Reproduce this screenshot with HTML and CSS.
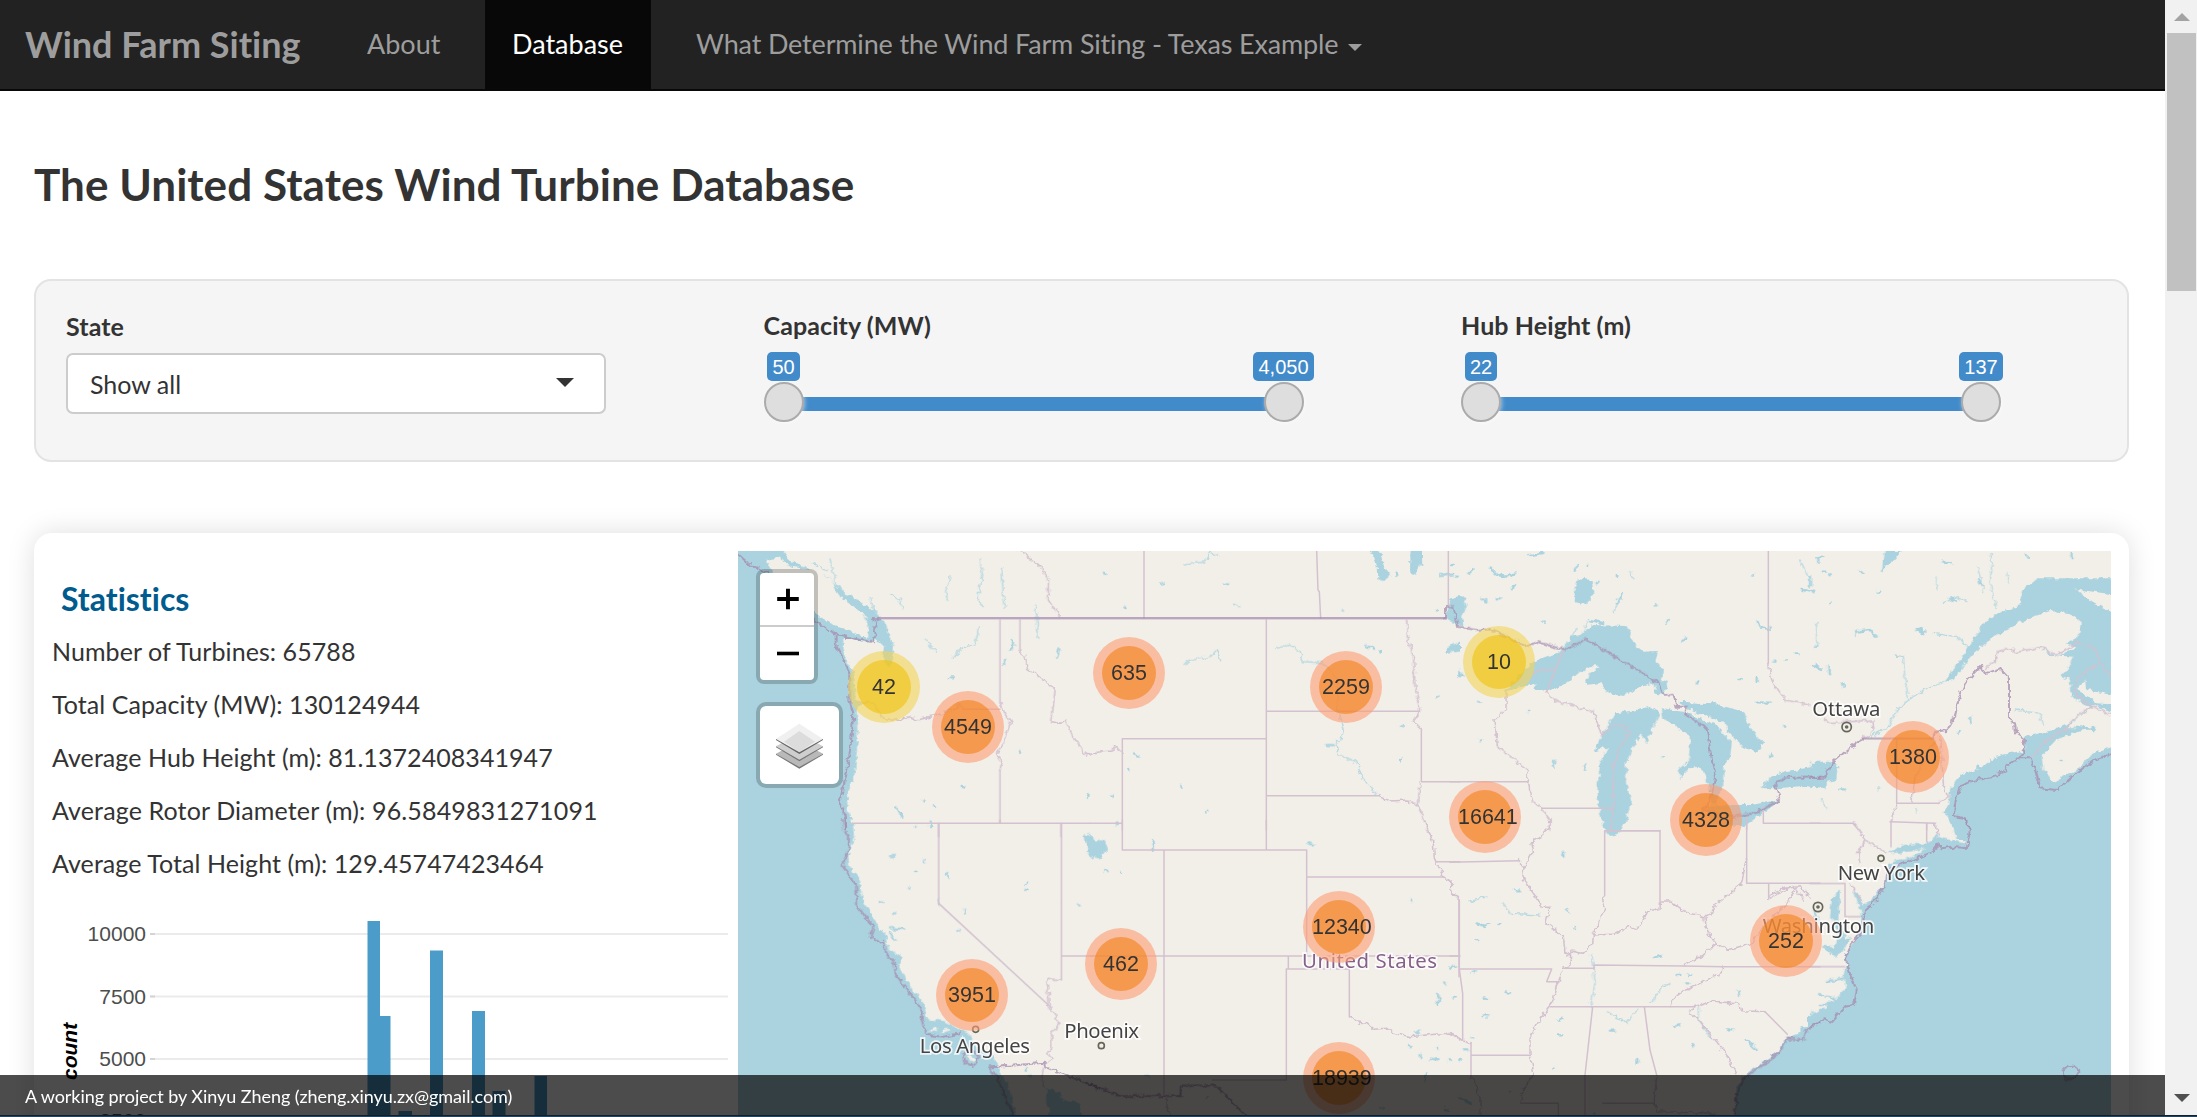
FILE: index.html
```html
<!DOCTYPE html>
<html lang="en">
<head>
<meta charset="utf-8">
<title>Wind Farm Siting</title>
<link rel="stylesheet" href="styles.css">
</head>
<body>
<div class="window">
  <div class="page">
    <nav class="navbar">
      <a class="brand">Wind Farm Siting</a>
      <a class="nav-item about">About</a>
      <a class="nav-item active">Database</a>
      <a class="nav-item menu">What Determine the Wind Farm Siting - Texas Example<span class="caret"></span></a>
    </nav>
    <main>
      <h1>The United States Wind Turbine Database</h1>
      <section class="filters">
        <div class="field">
          <label class="state-label">State</label>
          <div class="select"><span>Show all</span><i class="arrow"></i></div>
        </div>
        <div class="field">
          <label>Capacity (MW)</label>
          <div class="slider"><div class="track"></div>
            <span class="stop"><b>50</b><i></i></span><span class="stop"><b>4,050</b><i></i></span></div>
        </div>
        <div class="field">
          <label>Hub Height (m)</label>
          <div class="slider"><div class="track"></div>
            <span class="stop"><b>22</b><i></i></span><span class="stop"><b>137</b><i></i></span></div>
        </div>
      </section>
      <section class="card">
        <div class="stats">
          <h2>Statistics</h2>
          <p>Number of Turbines: 65788</p>
          <p>Total Capacity (MW): 130124944</p>
          <p>Average Hub Height (m): 81.1372408341947</p>
          <p class="rotor">Average Rotor Diameter (m): 96.5849831271091</p>
          <p>Average Total Height (m): 129.45747423464</p>
          <svg class="chart" viewBox="52 900 680 217" width="680" height="217">
            <g stroke="#ebebeb" stroke-width="2"><path d="M150 934H728M150 996.500H728M150 1059H728M150 1121H728"/></g>
            <g stroke="#d4d4d4" stroke-width="2"><path d="M150 934h5M150 996.500h5M150 1059h5"/></g>
            <g fill="#4c9cc9"><path d="M367.500 921H380V1016H390.500V1117H367.500zM398.500 1111H412V1117H398.500zM430 950.500H443V1117H430zM472 1011H485V1117H472zM492.500 1091H505.500V1117H492.500zM534.500 1076H547V1117H534.500z"/></g>
            <g class="ticks" text-anchor="end"><text x="146" y="941">10000</text><text x="146" y="1003.500">7500</text><text x="146" y="1066">5000</text><text x="146" y="1128">2500</text></g>
            <text class="axis" transform="translate(77 1080) rotate(-90)">count</text>
          </svg>
        </div>
        <div class="map">
          <svg class="tiles" viewBox="0 0 4119 1698" width="1373" height="566">
            <defs>
              <filter id="rough" x="0" y="0" width="4119" height="1698" filterUnits="userSpaceOnUse">
                <feTurbulence type="fractalNoise" baseFrequency=".06" numOctaves="2" seed="4"/>
                <feDisplacementMap in="SourceGraphic" scale="19" xChannelSelector="R" yChannelSelector="G"/>
              </filter>
            </defs>
            <rect width="4119" height="1698" fill="#f2efe9"/>
            <!-- oceans, lakes and rivers -->
            <g filter="url(#rough)">
              <g transform="translate(-24 -33)">
                <path class="w" d="M-10 0H145L175 60 215 75 255 100 300 115 330 150 390 185 440 215 470 260 492 320 480 385 460 360 465 320 440 300 410 308 340 290 340 320 350 360 372 400 376 480 400 487 380 500 383 600 375 700 350 770 355 820 367 900H-10z"/>
                <path class="l" d="M110 60L150 52 185 80 215 85 255 95 305 120 330 170 400 220 415 250 415 290 380 285 340 265 290 245 250 215 180 150 120 90z"/>
                <path class="r thin" d="M300 60l20 80 30 20M290 90l-40-20M420 170l10 40M480 160l30 20 8 25M660 110L645 160 655 180M750 60L758 110 745 150 745 185 760 200M815 80L820 170 828 205M915 200L925 250 920 290M750 260L735 310 690 330 670 355M590 300L620 340"/>
                <path class="r" d="M988 325l-6 25M845 300l8 15-12 14M825 360v15M695 738l8 2M500 805l14 22M580 780v4M612 798l3 3M867 630v4M1070 770l8-5M602 850v15M660 415h8M460 340l20 30"/>
              </g>
              <g transform="translate(1056 -33)">
                <path class="w" d="M835 20L860 75 862 118 880 123 905 105 885 80 870 40 855 20zM962 20L960 95 975 105 990 75 1000 80 998 20zM1070 240L1065 220 1085 180 1110 170 1120 260zM1070 325L1110 305V335L1070 338z"/>
                <path class="r thin" d="M280 75L345 65 360 35 380 45M560 325L600 315 630 335 640 365 700 368 730 400 745 440 740 500 760 570 750 610 735 600 745 645 800 665 815 710 860 763M285 370L300 360 360 352 380 330 392 362M430 190l20 10"/>
                <path class="r" d="M43 97v4M213 130h6M400 128l15 6M103 200l4 6M755 211h5M1040 211h4M920 100l2 8M825 318l30 8M870 335h3M132 640l14 12M118 688v4M272 738l3 4M348 812l2 8M935 558h4M933 658v3M1043 471h3M1050 105l40-5M1108 390v15M80 845v10M710 615h20M62 770h4"/>
              </g>
              <g transform="translate(2136 -33)">
                <path class="w" d="M160 455L250 365 330 335 365 290 390 285 430 255 530 258 550 310 580 335 625 333 618 360 640 390 632 420 655 430 640 465 615 460 610 430 560 445 520 468 475 460 450 430 405 435 420 400 450 380 420 378 385 400 350 430 290 452 255 450 260 430 200 445zM370 155L385 115 425 120 430 160 410 195 375 185z"/>
                <path class="w" d="M432 635L450 595 495 520 560 510 600 500 630 520 610 560 590 610 575 580 550 620 530 665 528 730 543 780 530 840 510 880 480 888 465 870 445 800 442 740 450 670 475 620zM635 505L700 515 800 555 845 610 840 650 820 680 820 740 790 800 775 740 765 700 745 680 720 685 695 715 682 690 720 660 722 590 680 560 640 540zM685 485L790 490 880 515 900 560 940 610 920 640 880 620 840 580 820 545 730 515zM770 800L850 795 900 795 990 780 960 805 880 860 780 850zM935 745L960 710 1010 693 1130 675V745L1060 738 980 745zM0 230V180L40 165 50 200 30 245z"/>
                <path class="r" d="M0 320l25-5M85 485l4 4M30 405h10M120 85l20 20 30 5 25-10M95 175l15 12M185 145l10-10M240 45l40-6M275 245h12M410 75h4M500 105h5M440 130l5-5M380 80l-6 12M515 165l-15 25M140 175h10M55 100l15-10M5 75h8M18 110h6M655 240l-4 8M615 195v2M700 300l8-8M910 103v7M920 245l15 18 25 4M1060 150l30 8M1080 110v30M970 365h6M1005 358h5M920 410v15M865 420h10M920 487l40 1M1000 560h8M960 640l4 10M635 652h4M312 665v15M405 670v20M235 513h6M90 601h4M740 427h4M1100 370l4 8M1040 340h6M1105 55v10M420 240l40 10M600 560h10"/>
                <path class="r thin" d="M360 300L380 265M400 280l10-35M490 215l25-45M550 115l-10-20M1050 60L1075 110"/>
              </g>
              <g transform="translate(3216 -33)">
                <path class="w" d="M960 115H680L640 150 625 200 575 215 520 250 470 330 430 390 400 425 430 420 490 340 540 300 640 240 720 213 780 220 815 250 805 290 770 310 800 320 740 350 690 320 720 345 790 350 770 390 750 410 780 420 780 460 810 490 840 500 790 545 730 570 645 590 645 630 600 640 560 650 520 680 450 705 420 750 415 790 400 820 425 840 440 900H960zM0 665L60 665 85 680 75 720 0 745zM225 33H275L240 70 215 95zM315 265l20-5 15 15-15 12z"/>
                <path class="l" d="M770 565L850 495 960 535V605L850 640 800 690 730 728 700 690 695 650 740 600 810 572 865 563zM800 445L825 420 830 450 960 475V498L860 490zM797 148L850 155 960 170V238L850 190z"/>
                <path class="r thin" d="M420 420L340 450 280 490 250 530 235 560 185 590M370 280L440 290 475 320M505 80L515 120 520 155M540 40L545 90 540 130 558 200M380 110v40M255 345L280 350 285 420 295 470M400 190l40-20 30 15M590 100l5 30M615 510L690 520 700 555M145 270l-10 20M205 750l8-12M35 780l15 30M320 805v15M20 250V320"/>
                <path class="r" d="M20 55l20-5M400 65l20 5M40 95h8M10 155h6M150 90l10 10M200 155h8M60 190h4M140 275l40-5 20 20M10 375l25 15M55 380l2 20M100 430v10M18 320h3M480 530l2 20M90 748h15M420 175l20 10M445 575h4M505 120l12 20M650 45l5 8M785 40v15M755 660h6M795 560l60 8M540 660l15 10M60 100l2 3M500 680l30 5"/>
              </g>
              <g transform="translate(-24 807)">
                <path class="w" d="M-10-10H367L373 60 355 110 358 140 390 180 395 240 430 290 445 320 470 345 475 385 515 410 510 440 530 480 580 550 592 598 640 602 690 630 720 645 735 680 790 700 803 740 835 800 870 920H-10zM950 805L985 815 1000 840 1050 850 1055 920H975L945 840z"/>
                <path class="w" d="M1062 38L1080 48 1090 75 1125 60 1130 90 1105 118 1075 95z"/>
                <path class="l" d="M595 632l25-8 5 8-25 6zM635 630l20-4 5 6-20 6zM705 710l15-5 20 15-8 5z"/>
                <path class="r" d="M602 5v15M650 160l8 18M625 240v10M705 272v5M685 330h5M890 188v3M890 208v2M1047 253h4M480 325h12l30 2M480 340l15 22M450 245l8 4M490 283h3M535 205h4M480 108h12M582 118v6M555 152h5M890 745v4M897 767h5M555 20h4"/>
              </g>
              <g transform="translate(1056 807)">
                <path class="w" d="M0 55L30 60 40 100 10 115-10 95z"/>
                <path class="r" d="M45 150l8 8M92 156v3M188 65v25M655 70l15 4M963 238l4 4M1090 440l6-4M1065 487l3 3M1040 525l12 8-10 20M1088 530l6 2M980 640l10-8M958 678l4 4M992 705v12M1040 685h4M1020 716l20 2M1075 718h5M1010 760l-8 20M168 768h6M350 835v3M872 865h3M1065 865l12 8"/>
              </g>
              <g transform="translate(2136 807)">
                <path class="w" d="M1150 570L1060 620 1040 645 1000 660 985 695 890 760 860 800 850 920H1150z"/>
                <path class="r thin" d="M422 405L432 440 435 490 422 560M605 550L635 500 660 490M470 575L530 608 560 570M745 565L745 600 785 655M110 230L60 245M160 250l20 30 90 5"/>
                <path class="r" d="M195 211h12M340 100v10M354 270v6M373 320v5M80 310l25 8 12-8M145 315h6M80 360h8M10 440l-8 5M68 456l6-3M105 532l8 4M170 517l12 2M98 589h15M5 532h8M65 652h4M40 688h12M25 720h5M325 602l12-6M325 646h12M310 745v4M562 720v8M480 632h15M615 412l20-5M680 465h8M715 465l8-2M710 490h8M675 618l12-5M725 672l5 6M830 628h18M865 515l2 10M890 660l30 28M435 880v4M30 830l30 20M180 815h3"/>
              </g>
              <g transform="translate(3216 807)">
                <path class="w" d="M960-10H415L430 25 460 35 470 70 420 60 385 50 350 70 280 75 230 100 300 95 350 85 300 112 235 130 225 190 190 230 160 260 150 230 125 210 155 275 150 330 130 370 105 410 110 430 100 470 108 510 50 560-10 590V920H960zM90 205L65 240 60 290 80 330 75 380 40 375 75 410 95 400 110 370 130 350 110 355 85 300z"/>
                <path class="r" d="M50 485l50-10M30 525l50 12 20-15M30 555l40-5M380 45l-8 12M5 580v10M10 270l15 40M40 380l20 20"/>
              </g>
            </g>
            <!-- straight state and province borders -->
            <g class="s">
              <path transform="translate(-24 -33)" d="M810 240V490M810 690V848M870 240V330M365 850H1080M626 850V890M993 850V890M700 508H810"/>
              <path transform="translate(1056 -33)" d="M162 33V235M680 33L684 150 688 155 692 235M529 240V870M529 514H988M529 767H868M994 567V725H1110M529 596H97V870M0 850H97M1075 33V200"/>
              <path transform="translate(2136 -33)" d="M955 33V370M0 725H235M275 805H492M290 455L340 330M190 430L270 390H315M940 800V850H1110M890 830V870M465 872H630"/>
              <path transform="translate(3216 -33)" d="M260 600V790H385M0 850H130M243 845L375 850M350 850V870"/>
              <path transform="translate(-24 807)" d="M810 0V10M626 10V250L955 555M994 10V480M994 408H1110"/>
              <path transform="translate(1056 807)" d="M97 0V90H650V408M529 0V90M222 90V825M0 408H1110M650 171H1062M1040 125H1110M1107 240V470M595 408V447M589 447H778V590M589 447V780H368"/>
              <path transform="translate(2136 807)" d="M0 127L205 122M464 32V225M464 32H630V243M890 0V190H1110M956 190V235M432 447V435L700 438 820 440H1110M28 240V447H305L290 485H325M340 445H432M0 408H28M28 447L38 520V660M63 668V765M63 706H240M300 560H735M428 560L405 765V891M583 560L600 690 620 765M945 575L1012 643M458 850H612M212 850H325V891"/>
              <path transform="translate(3216 807)" d="M0 190H105V290H150M0 440H105M243 5V80M350 10V65"/>
            </g>
            <!-- borders that follow rivers and ridges -->
            <g class="s" filter="url(#rough)">
              <path transform="translate(-24 -33)" d="M875 33L935 85 955 120 955 180 990 230M380 485L430 490 465 540 500 540 540 530 560 540 620 525 680 505 690 490 700 508M810 490L822 515 842 545 820 610 800 640 815 670 810 690M870 330L890 360 890 380 975 450 965 545 990 550 1005 540 1030 590 1065 645 1110 638"/>
              <path transform="translate(1056 -33)" d="M868 767L900 783 950 780 985 800 1015 870M950 240L952 290 970 350 975 440 988 490V520L970 543 994 567M990 725L985 800M20 637L68 633 75 617 97 640"/>
              <path transform="translate(2136 -33)" d="M955 370L965 420 1005 480 1080 495M290 455L310 480 430 515 445 560 455 585 490 555 515 558 540 575 510 620 490 680 492 800 485 870M168 450V505L135 540 142 620 190 655 232 690 235 725 243 780 275 805 300 840V870"/>
              <path transform="translate(3216 -33)" d="M525 385L555 365 562 335 600 325 615 338 690 322 740 345 800 308 850 325 870 365 903 412M870 365L800 415 793 460 830 490 903 525M662 655L710 600 765 570 800 530 845 500M385 790L415 770 400 735 392 590M375 600L315 710 305 790M260 790L243 845M130 850L150 870M45 535L60 550 185 540 190 575 160 596"/>
              <path transform="translate(-24 807)" d="M955 555L990 612 965 640 965 690 950 700 967 715 948 730M994 480L950 475 958 555M940 745l-5 30 10 30"/>
              <path transform="translate(1056 807)" d="M1005 0L1030 70 1033 115 1062 171 1090 190 1080 210 1107 240M778 590L800 605 830 610 850 628 890 625 910 640 960 650 1010 645 1070 640 1110 660M222 825L235 850 228 865 245 890"/>
              <path transform="translate(2136 807)" d="M205 122L222 140 218 165 228 190 265 240 275 262 300 262 288 310 340 350 345 400 362 405 360 435 340 445 325 490 305 550 280 580 240 650 240 705 252 760 215 820 212 850M300 0L297 25 270 50 245 65 250 95 225 140M464 225L455 240 465 270 430 345 428 370 400 400 365 393 350 408M430 345L490 343 535 320 560 330 590 275 630 265 632 243 660 243 700 275 765 290 780 285 800 250 850 210 875 190 888 120M765 295L770 330 800 370 830 390 900 372 960 300 1010 250 1030 215M956 235L1030 200 1060 240M960 225l40-20 50-5 30 35M800 370L750 410 700 438M0 640L38 660 63 668M63 765L90 830V880M620 765L612 850 625 875 800 880M660 560L665 540 690 520 820 455V438M735 560L790 543 870 553 875 572 945 575M735 560L720 580 745 600 800 665 835 715 857 765M0 180L10 190 0 210 28 240"/>
              <path transform="translate(3216 807)" d="M130 10L165 60 225 95M165 60L145 100 150 130M120 190L155 240M375 10L388 45"/>
            </g>
            <!-- country borders and territorial waters -->
            <path class="c" d="M420 202H2123M3376 563H3586"/>
            <g class="c" filter="url(#rough)">
              <path transform="translate(-24 -33)" d="M24 42L60 75 110 95 255 240 290 270 320 282 390 300 425 305 438 285 432 265 442 255 428 240 450 235M320 282V320L345 370 358 400V480L370 520 362 620 350 700 330 780 345 830V870"/>
              <path transform="translate(2136 -33)" d="M-15 235V200L10 202 25 260 75 270 120 268 150 280 230 320 260 305 310 320 350 328 408 298 628 430 640 465 670 462 680 500 710 500 705 522 770 567 795 715 775 790 760 810 850 830 920 818 990 780 975 735 1005 713H1110"/>
              <path transform="translate(3216 -33)" d="M0 713H42L70 665 100 640 160 596M370 596L375 575 410 570 435 530 445 480 465 430 510 378 525 400 570 385 597 415V540L615 550 618 580 645 600 640 630 628 655H662L680 700 690 745 740 750 800 700 850 660 920 638M628 655L590 675 585 695 540 712 480 725 450 740 435 790 432 828 465 835 482 870"/>
              <path transform="translate(-24 807)" d="M342 0L345 30 357 50 355 95 335 135 378 195 382 260 430 320 422 350 445 368 462 365 468 400 493 430 498 465 555 540 575 570V600L590 645 640 650 690 640M700 700q40-20 45 15-15 40-40 10zM780 735V755L800 765 830 840 860 900M785 742L945 728 948 742 1110 805"/>
              <path transform="translate(1056 807)" d="M0 793L92 828H272V797H378L480 900"/>
              <path transform="translate(2136 807)" d="M1110 605L1070 630 1060 660 1010 655 985 700 880 775 860 830 850 900"/>
              <path transform="translate(3216 807)" d="M465 0L480 30 470 85 425 80 395 85 385 70 370 95 230 150 225 190 200 240 165 270 160 300 150 340 125 370 107 415 120 460 140 510 132 555 105 560 65 605 40 598 0 620M757 760q0-20 30-23 22 10 17 25-20 22-40 15z"/>
            </g>
            <g class="dots">
              <circle cx="3326" cy="528" r="14"/><circle cx="3326" cy="528" r="3"/>
              <circle cx="3240" cy="1068" r="14"/><circle cx="3240" cy="1068" r="3"/>
              <circle cx="3429" cy="922" r="9"/><circle cx="713" cy="1435" r="9"/><circle cx="1090" cy="1484" r="9"/>
            </g>
            <g class="city">
              <text x="3223" y="495" textLength="204">Ottawa</text>
              <text x="3299" y="986" textLength="262">New York</text>
              <text x="3074" y="1146" textLength="335">Washington</text>
              <text x="545" y="1505" textLength="331">Los Angeles</text>
              <text x="979" y="1461" textLength="224">Phoenix</text>
              <text class="country" x="1692" y="1252" textLength="405">United States</text>
            </g>
          </svg>
          <span class="cluster small" style="left:110px;top:100px"><b>42</b></span>
          <span class="cluster" style="left:194px;top:140px"><b>4549</b></span>
          <span class="cluster" style="left:355px;top:86px"><b>635</b></span>
          <span class="cluster" style="left:572px;top:100px"><b>2259</b></span>
          <span class="cluster small" style="left:725px;top:75px"><b>10</b></span>
          <span class="cluster" style="left:711px;top:230px"><b>16641</b></span>
          <span class="cluster" style="left:932px;top:233px"><b>4328</b></span>
          <span class="cluster" style="left:1139px;top:170px"><b>1380</b></span>
          <span class="cluster" style="left:1012px;top:354px"><b>252</b></span>
          <span class="cluster" style="left:565px;top:340px"><b>12340</b></span>
          <span class="cluster" style="left:347px;top:377px"><b>462</b></span>
          <span class="cluster" style="left:198px;top:408px"><b>3951</b></span>
          <span class="cluster" style="left:565px;top:491px"><b>18939</b></span>
          <div class="controls">
            <div class="zoom">
              <svg viewBox="0 0 54 53"><path d="M17 26.500H39M28 16V37" stroke="#000" stroke-width="4"/></svg>
              <svg viewBox="0 0 54 53"><path d="M17 26.500H39" stroke="#000" stroke-width="3.600"/></svg>
            </div>
            <div class="layers">
              <svg viewBox="90 498 237 234" width="79" height="78">
                <path d="M138 641L208 603 279 641 208 684z" fill="#b9b9b9"/><path d="M138 641L208 681 279 641V644L208 686 138 644z" fill="#777"/>
                <path d="M138 619L208 581 279 619 208 661z" fill="#cecece"/><path d="M138 619L208 659 279 619V622L208 664 138 622z" fill="#777"/>
                <path d="M138 597L208 551 279 597 208 639z" fill="#f0f0f0"/><path d="M162 605L208 573 255 605 208 637z" fill="#dcdcdc"/><path d="M138 597L208 637 279 597V600L208 642 138 600z" fill="#666"/>
              </svg>
            </div>
          </div>
        </div>
      </section>
    </main>
  </div>
  <aside class="scrollbar"><i class="up"></i><div class="thumb"></div><i class="down"></i></aside>
  <footer>A working project by Xinyu Zheng (zheng.xinyu.zx@gmail.com)</footer>
  <div class="edge"></div>
</div>
</body>
</html>
```
FILE: styles.css
```css
* { box-sizing: border-box; }
body { margin: 0; font-family: Lato, "Liberation Sans", sans-serif; font-variant-ligatures: none; color: #333; background: #fff; overflow: hidden; }
.window { position: relative; display: flex; width: 2197px; height: 1117px; overflow: hidden; }
.page { width: 2165px; flex: none; }
.navbar { display: flex; height: 91px; background: #222; border-bottom: 2px solid #080808; line-height: 89px; color: #9d9d9d; white-space: nowrap; }
.brand { font-size: 36px; font-weight: 700; width: 340px; padding-left: 25px; }
.nav-item { font-size: 27px; line-height: 87px; }
.about { width: 145px; padding-left: 27px; }
.active { width: 166px; padding-left: 27px; background: #080808; color: #fff; }
.menu { padding-left: 45px; letter-spacing: -.16px; }
.caret { display: inline-block; margin-left: 10px; vertical-align: 3px; border: 7px solid transparent; border-top-color: currentColor; border-bottom: 0; }
main { padding: 0 36px 0 34px; }
h1 { margin: 0; height: 188px; padding-top: 65px; font-size: 44px; line-height: 56px; font-weight: 700; letter-spacing: .06px; white-space: nowrap; }
.filters { display: grid; grid-template-columns: repeat(3, 697.5px); height: 183px; border: 2px solid #e3e3e3; border-radius: 17px; background: #f5f5f5; padding: 27px 0 0 30px; }
.field { width: 540px; }
label { display: block; font-size: 25px; line-height: 34px; height: 44px; font-weight: 700; letter-spacing: .1px; white-space: nowrap; }
.state-label { padding-top: 1px; }
.select { display: flex; align-items: center; justify-content: space-between; height: 61px; margin-top: 1px; border: 2px solid #ccc; border-radius: 7px; background: #fff; padding: 0 30px 0 22px; font-size: 25px; }
.arrow { margin-top: -3px; border: 9px solid transparent; border-top-color: #333; border-bottom: 0; }
.slider { position: relative; display: flex; justify-content: space-between; height: 70px; font-family: "Liberation Sans", Arial, sans-serif; }
.track { position: absolute; left: 18px; right: 18px; top: 45px; height: 14px; background: #428bca; }
.stop { position: relative; display: flex; flex-direction: column; align-items: center; width: 40px; gap: 1px; }
.stop b { height: 29px; padding: 0 5px; border-radius: 5px; background: #428bca; color: #fff; font-size: 20px; font-weight: 400; line-height: 30px; }
.stop i { width: 40px; height: 40px; flex: none; border: 2px solid #ababab; border-radius: 50%; background: #dedede; box-shadow: 1px 1px 4px rgba(255,255,255,.5); }
.card { display: flex; margin-top: 71px; height: 620px; border-radius: 18px; background: #fff; box-shadow: 0 0 28px rgba(0,0,0,.13); }
.stats { width: 704px; padding: 45px 0 0 18px; white-space: nowrap; }
h2 { margin: 0 0 0 9px; height: 53px; font-size: 32px; line-height: 42px; font-weight: 700; color: #005b8f; }
.stats p { margin: 0; font-size: 25px; line-height: 40px; height: 53px; letter-spacing: .07px; }
.stats .rotor { letter-spacing: .14px; }
.chart { display: block; margin-top: 4px; font-family: "Liberation Sans", Arial, sans-serif; }
.ticks { font-size: 21px; fill: #4d4d4d; }
.axis { font-size: 21px; font-weight: 700; font-style: italic; fill: #000; }
.map { position: relative; width: 1373px; height: 566px; margin-top: 18px; overflow: hidden; font-family: "Liberation Sans", Arial, sans-serif; }
.tiles { display: block; }
.w { fill: #aad3df; }
.l { fill: #f2efe9; }
.r, .s, .c { fill: none; stroke-linecap: round; stroke-linejoin: round; }
.r { stroke: #aad3df; stroke-width: 7; }
.thin { stroke-width: 4; stroke-opacity: .8; }
.s { stroke: #d3c1d0; stroke-width: 4.5; }
.c { stroke: #a58caf; stroke-width: 6; stroke-opacity: .75; }
.dots circle { fill: #f2efe9; stroke: #666658; stroke-width: 5; }
.city { font: 61px "Noto Sans", sans-serif; fill: #444; stroke: rgba(255,255,255,.8); stroke-width: 10; paint-order: stroke; }
.country { fill: #85608a; }
.cluster { position: absolute; width: 72px; height: 72px; padding: 9px; border-radius: 50%; background: rgba(253,156,115,.6); }
.cluster b { display: block; width: 54px; height: 54px; border-radius: 50%; background: rgba(241,128,23,.6); font-size: 21.500px; line-height: 54px; font-weight: 400; text-align: center; color: #333; }
.small { background: rgba(241,211,87,.6); }
.small b { background: rgba(240,194,12,.6); }
.controls { position: absolute; left: 18px; top: 18px; display: flex; flex-direction: column; align-items: flex-start; gap: 18px; }
.zoom, .layers { border: 4px solid rgba(0,0,0,.2); background: #fff; background-clip: padding-box; }
.zoom { width: 62px; height: 115px; border-radius: 8px; }
.zoom svg { display: block; width: 54px; height: 53px; }
.zoom svg:first-child { height: 54px; border-bottom: 2px solid #ccc; }
.layers { width: 87px; height: 86px; border-radius: 10px; }
.layers svg { display: block; }
.scrollbar { display: flex; flex-direction: column; align-items: center; width: 32px; background: #f1f1f1; padding: 13px 1px 15px 2px; }
.up { border: 8px solid transparent; border-bottom-color: #a3a3a3; border-top: 0; }
.thumb { width: 29px; height: 258px; margin-top: 12px; background: #c1c1c1; }
.down { margin-top: auto; border: 8px solid transparent; border-top-color: #505050; border-bottom: 0; }
footer { position: absolute; left: 0; bottom: 2px; width: 2165px; height: 40px; padding-left: 25px; background: rgba(0,0,0,.7); color: #fff; font-size: 18px; line-height: 43px; letter-spacing: -.05px; }
.edge { position: absolute; left: 0; bottom: 0; width: 100%; height: 2px; background: #1f4560; border-top: 1px solid #101e30; }
```
